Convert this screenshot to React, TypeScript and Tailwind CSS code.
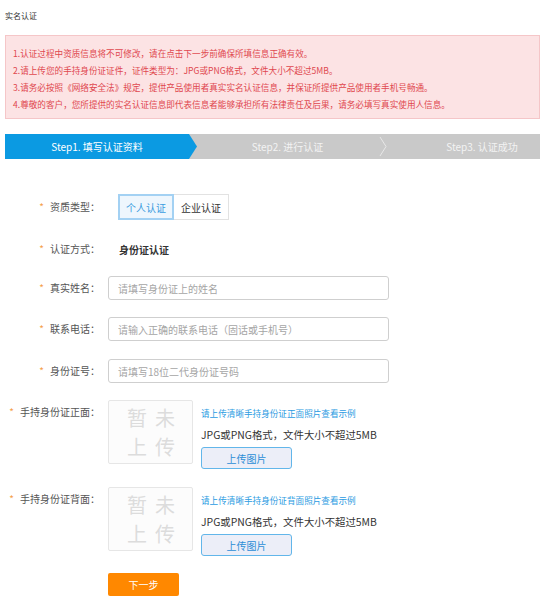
import React from "react";

const notices = [
  "1.认证过程中资质信息将不可修改，请在点击下一步前确保所填信息正确有效。",
  "2.请上传您的手持身份证证件，证件类型为：JPG或PNG格式，文件大小不超过5MB。",
  "3.请务必按照《网络安全法》规定，提供产品使用者真实实名认证信息，并保证所提供产品使用者手机号畅通。",
  "4.尊敬的客户，您所提供的实名认证信息即代表信息者能够承担所有法律责任及后果，请务必填写真实使用人信息。",
];

const Label = ({ text }: { text: string }) => (
  <div className="w-[95px] shrink-0 text-right text-[10px] leading-[14px] text-[#555]">
    <span className="mr-[6px] text-[#f5a04c]">*</span>
    {text}：
  </div>
);

const TextInput = ({ placeholder }: { placeholder: string }) => (
  <input
    className="ml-[8px] h-[24px] w-[281px] rounded-[3px] border border-[#cfcfcf] bg-white pl-[9px] text-[10px] text-[#333] outline-none placeholder:text-[#a5a5a5]"
    placeholder={placeholder}
  />
);

const UploadRow = ({ label, hint, className }: { label: string; hint: string; className: string }) => (
  <div className={className}>
    <div className="pt-[5px]">
      <Label text={label} />
    </div>
    <div className="ml-[8px] flex h-[64px] w-[85px] flex-col items-center justify-center rounded-[2px] border border-[#e6e6e6] bg-[#fcfcfc] text-[20px] leading-[29px] tracking-[8px] text-[#dcdcdc]">
      <span className="pl-[9px]">暂未</span>
      <span className="pl-[9px]">上传</span>
    </div>
    <div className="ml-[8px] flex flex-col items-start">
      <span className="mt-[6px] text-[8.6px] leading-[14px] text-[#2a9be2]">{hint}</span>
      <span className="mt-[8px] text-[10.4px] leading-[14px] text-[#333]">JPG或PNG格式，文件大小不超过5MB</span>
      <button className="mt-[5px] h-[22px] w-[91px] rounded-[3px] border-[1.5px] border-[#62b6ea] bg-[#eceef8] text-[10px] text-[#2b8dd6]">
        上传图片
      </button>
    </div>
  </div>
);

export default function App() {
  return (
    <div className="min-h-[607px] w-[554px] bg-white px-[5px] font-['Noto_Sans_CJK_SC',sans-serif]">
      <div className="pt-[10px] text-[8px] leading-[12px] text-[#333]">实名认证</div>

      <div className="mt-[13px] h-[84px] w-[535px] border border-[#f5c6c8] bg-[#fce3e4] pl-[7px] pt-[9px] text-[8.6px] leading-[17px] text-[#e0484f]">
        {notices.map((n) => (
          <div key={n}>{n}</div>
        ))}
      </div>

      <div className="mt-[15px] flex h-[25px] w-[535px] bg-[#c9c9c9] text-[10px] text-white">
        <div className="flex w-[184px] items-center justify-center bg-[#0b9ae2]">Step1. 填写认证资料</div>
        <svg width="8" height="25" viewBox="0 0 8 25">
          <polygon points="0,0 8,12.5 0,25" fill="#0b9ae2" />
        </svg>
        <div className="flex w-[181px] items-center justify-center text-[#f3f3f3]">Step2. 进行认证</div>
        <svg width="10" height="25" viewBox="0 0 10 25">
          <polyline points="2,3 8,12.5 2,22" fill="none" stroke="#e8e8e8" strokeWidth="1" />
        </svg>
        <div className="flex flex-1 items-center justify-center pl-[36px] text-[#f3f3f3]">Step3. 认证成功</div>
      </div>

      <div className="mt-[35px] flex h-[26px] items-center">
        <Label text="资质类型" />
        <div className="ml-[18px] flex h-[26px] text-[10px]">
          <button className="h-[26px] w-[56px] border-2 border-[#a3d1f3] bg-[#eef6fd] text-[#3a9ce0]">个人认证</button>
          <button className="h-[26px] w-[55px] border border-l-0 border-[#e2e2e2] bg-white text-[#333]">企业认证</button>
        </div>
      </div>

      <div className="mt-[18px] flex h-[22px] items-center">
        <Label text="认证方式" />
        <span className="ml-[19px] text-[10px] font-bold text-[#333]">身份证认证</span>
      </div>

      <div className="mt-[16px] flex items-center">
        <Label text="真实姓名" />
        <TextInput placeholder="请填写身份证上的姓名" />
      </div>

      <div className="mt-[17px] flex items-center">
        <Label text="联系电话" />
        <TextInput placeholder="请输入正确的联系电话（固话或手机号）" />
      </div>

      <div className="mt-[18px] flex items-center">
        <Label text="身份证号" />
        <TextInput placeholder="请填写18位二代身份证号码" />
      </div>

      <UploadRow className="mt-[17px] flex items-start" label="手持身份证正面" hint="请上传清晰手持身份证正面照片查看示例" />
      <UploadRow className="mt-[18px] flex items-start" label="手持身份证背面" hint="请上传清晰手持身份证背面照片查看示例" />

      <button className="ml-[103px] mt-[17px] h-[23px] w-[71px] rounded-[2px] bg-[#ff8800] text-[10px] text-white">下一步</button>
    </div>
  );
}
